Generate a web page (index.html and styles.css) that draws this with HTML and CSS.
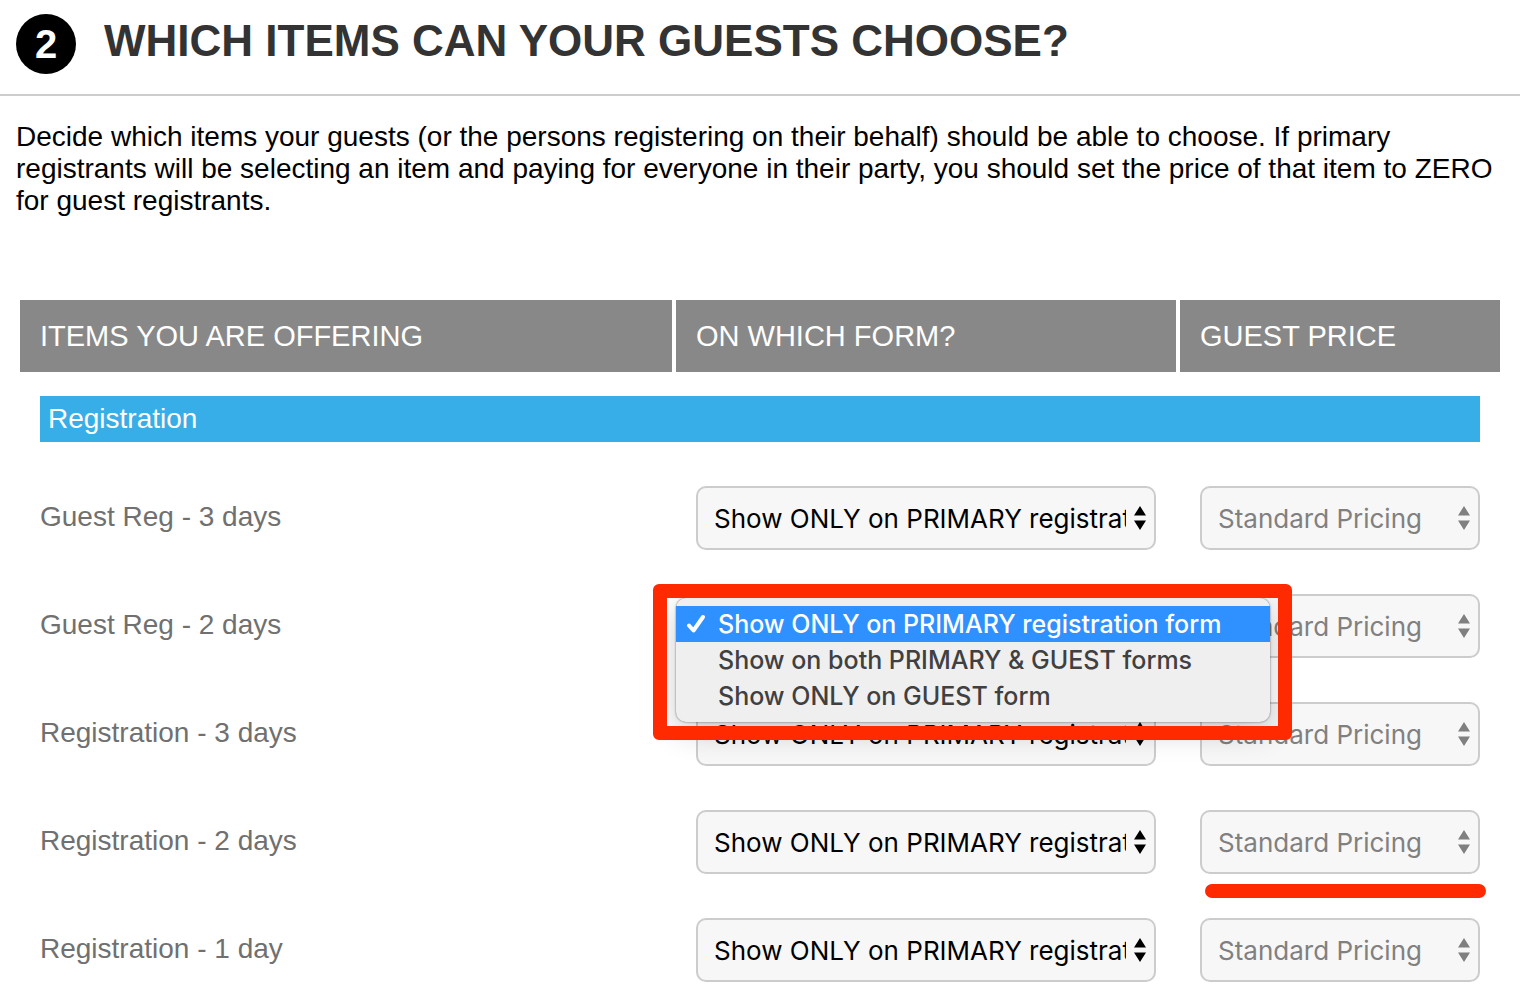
FILE: index.html
```html
<!DOCTYPE html>
<html lang="en">
<head>
<meta charset="utf-8">
<title>Which items can your guests choose?</title>
<link rel="stylesheet" href="styles.css">
</head>
<body>
<svg class="sprite" aria-hidden="true">
  <symbol id="arrows" viewBox="0 0 12 24"><path d="M6 0l6 9.500H0zM6 24l6-9.500H0z" fill="currentColor"/></symbol>
</svg>
<main class="step">
  <header class="step-header">
    <span class="step-number">2</span>
    <h1 class="step-title">WHICH ITEMS CAN YOUR GUESTS CHOOSE?</h1>
  </header>
  <p class="intro">Decide which items your guests (or the persons registering on their behalf) should be able to choose. If primary registrants will be selecting an item and paying for everyone in their party, you should set the price of that item to ZERO for guest registrants.</p>
  <table class="items">
    <colgroup><col class="col-item"><col class="col-form"><col class="col-price"></colgroup>
    <thead>
      <tr><th scope="col">ITEMS YOU ARE OFFERING</th><th scope="col" id="h-form">ON WHICH FORM?</th><th scope="col" id="h-price">GUEST PRICE</th></tr>
    </thead>
    <tbody>
      <tr><td class="category" colspan="3"><div class="category-name">Registration</div></td></tr>
      <tr>
        <td><label id="n1" for="f1">Guest Reg - 3 days</label></td>
        <td class="form-cell"><div class="picker"><select id="f1"><option>Show ONLY on PRIMARY registration form</option><option>Show on both PRIMARY &amp; GUEST forms</option><option>Show ONLY on GUEST form</option></select><svg class="arrows"><use href="#arrows"/></svg></div></td>
        <td><div class="picker"><select aria-labelledby="n1 h-price" disabled><option>Standard Pricing</option></select><svg class="arrows"><use href="#arrows"/></svg></div></td>
      </tr>
      <tr>
        <td><label id="n2" for="f2">Guest Reg - 2 days</label></td>
        <td class="form-cell"><div class="picker"><select id="f2"><option>Show ONLY on PRIMARY registration form</option><option>Show on both PRIMARY &amp; GUEST forms</option><option>Show ONLY on GUEST form</option></select><svg class="arrows"><use href="#arrows"/></svg>
          <ul class="menu" role="listbox" aria-labelledby="n2 h-form">
            <li class="option selected" role="option" aria-selected="true"><svg class="check" viewBox="0 0 20 20"><path d="M3 11.500l4.500 5L17 3" fill="none" stroke="currentColor" stroke-width="4" stroke-linecap="round" stroke-linejoin="round"/></svg>Show ONLY on PRIMARY registration form</li>
            <li class="option" role="option">Show on both PRIMARY &amp; GUEST forms</li>
            <li class="option" role="option">Show ONLY on GUEST form</li>
          </ul>
          <div class="highlight-box"></div></div></td>
        <td><div class="picker"><select aria-labelledby="n2 h-price" disabled><option>Standard Pricing</option></select><svg class="arrows"><use href="#arrows"/></svg></div></td>
      </tr>
      <tr>
        <td><label id="n3" for="f3">Registration - 3 days</label></td>
        <td class="form-cell"><div class="picker"><select id="f3"><option>Show ONLY on PRIMARY registration form</option><option>Show on both PRIMARY &amp; GUEST forms</option><option>Show ONLY on GUEST form</option></select><svg class="arrows"><use href="#arrows"/></svg></div></td>
        <td><div class="picker"><select aria-labelledby="n3 h-price" disabled><option>Standard Pricing</option></select><svg class="arrows"><use href="#arrows"/></svg></div></td>
      </tr>
      <tr>
        <td><label id="n4" for="f4">Registration - 2 days</label></td>
        <td class="form-cell"><div class="picker"><select id="f4"><option>Show ONLY on PRIMARY registration form</option><option>Show on both PRIMARY &amp; GUEST forms</option><option>Show ONLY on GUEST form</option></select><svg class="arrows"><use href="#arrows"/></svg></div></td>
        <td><div class="picker"><select aria-labelledby="n4 h-price" disabled><option>Standard Pricing</option></select><svg class="arrows"><use href="#arrows"/></svg><div class="highlight-line"></div></div></td>
      </tr>
      <tr>
        <td><label id="n5" for="f5">Registration - 1 day</label></td>
        <td class="form-cell"><div class="picker"><select id="f5"><option>Show ONLY on PRIMARY registration form</option><option>Show on both PRIMARY &amp; GUEST forms</option><option>Show ONLY on GUEST form</option></select><svg class="arrows"><use href="#arrows"/></svg></div></td>
        <td><div class="picker"><select aria-labelledby="n5 h-price" disabled><option>Standard Pricing</option></select><svg class="arrows"><use href="#arrows"/></svg></div></td>
      </tr>
    </tbody>
  </table>
</main>
</body>
</html>
```
FILE: styles.css
```css
* { box-sizing: border-box; }

body {
  margin: 0;
  padding-right: 14px;
  background: #fff;
  color: #000;
  font-family: "Liberation Sans", Arial, sans-serif;
  font-size: 28px;
  line-height: 32px;
}

.sprite { display: none; }

.step-header {
  display: flex;
  align-items: flex-start;
  gap: 28px;
  padding: 14px 16px 20px;
  border-bottom: 2px solid #ccc;
}

.step-number {
  width: 60px;
  height: 60px;
  border-radius: 50%;
  background: #000;
  color: #fff;
  font-size: 40px;
  font-weight: bold;
  line-height: 60px;
  text-align: center;
}

.step-title {
  margin: 0;
  color: #333;
  font-size: 44px;
  line-height: 54px;
}

.intro {
  margin: 0;
  padding: 25px 16px 83px;
}

.items {
  width: calc(100% - 40px);
  margin: 0 20px;
  border-collapse: separate;
  border-spacing: 0;
  table-layout: fixed;
}

.col-form { width: 504px; }
.col-price { width: 320px; }

.items th {
  padding: 20px;
  border-right: 4px solid #fff;
  background: #888;
  color: #fff;
  font-size: 29px;
  font-weight: normal;
  text-align: left;
}

.items th:last-child { border-right: 0; }

.items td {
  padding: 22px 20px;
  color: #707070;
}

.items .form-cell { padding-right: 24px; }

.items td label {
  display: block;
  padding-bottom: 2px;
}

.items .category { padding: 24px 20px 22px; }

.category-name {
  padding: 7px 8px;
  background: #37aee7;
  color: #fff;
}

.picker {
  position: relative;
  color: #000;
  font-family: Inter, "Liberation Sans", sans-serif;
  font-size: 26px;
}

.picker select {
  display: block;
  width: 100%;
  height: 64px;
  padding: 2px 28px 0 16px;
  border: 2px solid #ccc;
  border-radius: 10px;
  background: #f7f7f7;
  color: #000;
  font: inherit;
  appearance: none;
  opacity: 1;
}

.picker select:disabled,
.picker select:disabled ~ .arrows { color: #808080; }

.arrows {
  position: absolute;
  top: 20px;
  right: 10px;
  width: 12px;
  height: 24px;
  pointer-events: none;
}

.menu {
  position: absolute;
  z-index: 1;
  top: 4px;
  left: -20px;
  width: 594px;
  margin: 0;
  padding: 8px 0;
  border-radius: 10px;
  background: #efefef;
  box-shadow: 0 0 2px rgba(0, 0, 0, .6), 0 10px 30px rgba(0, 0, 0, .2);
  color: #404040;
  font-size: 25px;
  font-weight: 500;
  list-style: none;
}

.option {
  position: relative;
  padding: 0 42px;
  line-height: 36px;
  white-space: nowrap;
}

.option.selected {
  background: #2f91ff;
  color: #fff;
}

.check {
  position: absolute;
  top: 8px;
  left: 10px;
  width: 20px;
  height: 20px;
}

.highlight-box {
  position: absolute;
  z-index: 2;
  top: -10px;
  left: -43px;
  width: 639px;
  height: 156px;
  border: 14px solid #ff2a00;
  border-radius: 6px;
  pointer-events: none;
}

.highlight-line {
  position: absolute;
  top: 74px;
  right: -6px;
  left: 5px;
  height: 14px;
  border-radius: 7px;
  background: #ff2a00;
}
```
